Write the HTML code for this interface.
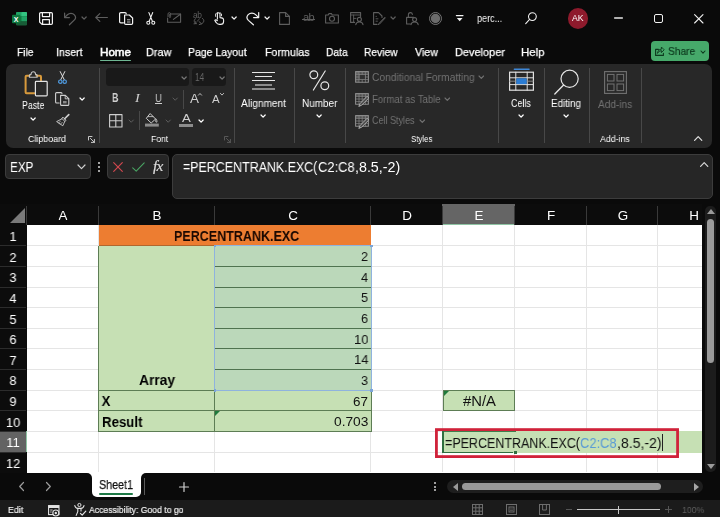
<!DOCTYPE html>
<html>
<head>
<meta charset="utf-8">
<title>Excel</title>
<style>
*{box-sizing:border-box;margin:0;padding:0}
html,body{width:720px;height:517px;overflow:hidden;background:#0a0a0a;font-family:"Liberation Sans",sans-serif;color:#fff}
#root{position:relative;width:720px;height:517px;background:#0a0a0a;overflow:hidden}
.a{position:absolute}
.t{position:absolute;white-space:nowrap;line-height:1;transform-origin:0 50%;display:inline-block;will-change:transform}
svg{position:absolute;overflow:visible}
#ribbon{position:absolute;left:6px;top:64px;width:706px;height:84px;background:#282828;border-radius:7px}
.sep{position:absolute;width:1px;background:#484848}
.fbox{position:absolute;background:#262626;border:1px solid #3c3c3c;border-radius:4px}
</style>
</head>
<body>
<div id="root">
<svg style="left:11.5px;top:11.5px" width="15" height="14" viewBox="0 0 15 14" ><rect x="4" y="0" width="11" height="13.6" rx="1.3" fill="#185c37"/><rect x="4" y="0" width="11" height="4.6" rx="1.3" fill="#21a366"/><rect x="9.5" y="0" width="5.5" height="4.6" rx="1.3" fill="#33c481"/><rect x="4" y="4.5" width="11" height="4.6" fill="#107c41"/><rect x="9.5" y="4.5" width="5.5" height="4.6" fill="#21a366"/><rect x="0" y="2.8" width="8.4" height="8.4" rx="0.9" fill="#0e7a40"/><text x="4.2" y="9.5" font-family="Liberation Sans, sans-serif" font-weight="bold" font-size="7" fill="#fff" text-anchor="middle">X</text></svg>
<svg style="left:39px;top:12px" width="14" height="13" viewBox="0 0 14 13" ><path d="M1.8 0.6 H12.2 Q13.4 0.6 13.4 1.8 V11.2 Q13.4 12.4 12.2 12.4 H3 L0.6 10 V1.8 Q0.6 0.6 1.8 0.6 Z" fill="none" stroke="#f2f2f2" stroke-width="1.2" stroke-linecap="round" stroke-linejoin="round" /><path d="M3.4 0.8 V4.6 H10.6 V0.8" fill="none" stroke="#f2f2f2" stroke-width="1.2" stroke-linecap="round" stroke-linejoin="round" /><path d="M3.6 12.2 V7.6 H10.4 V12.2" fill="none" stroke="#f2f2f2" stroke-width="1.2" stroke-linecap="round" stroke-linejoin="round" /></svg>
<svg style="left:64px;top:12px" width="12" height="13.4" viewBox="0 0 12 13.4" ><path d="M0.6 1 V5.6 H5.4" fill="none" stroke="#5e5e5e" stroke-width="1.2" stroke-linecap="round" stroke-linejoin="round" /><path d="M0.8 5.4 L3.4 2.8 C5.4 0.8 8.6 0.8 10.4 2.8 C12.2 4.8 11.6 6.8 10.2 8.2 L5.4 12.8" fill="none" stroke="#5e5e5e" stroke-width="1.2" stroke-linecap="round" stroke-linejoin="round" /></svg>
<svg style="left:81.9px;top:16.5px" width="4.2" height="2.2" viewBox="0 0 4.2 2.2" ><path d="M0 0 L2.1 2.2 L4.2 0" fill="none" stroke="#5e5e5e" stroke-width="1.25" stroke-linecap="round" stroke-linejoin="round"/></svg>
<svg style="left:95px;top:13px" width="13" height="9" viewBox="0 0 13 9" ><path d="M12.4 4.5 H0.8 M4.8 0.6 L0.8 4.5 L4.8 8.4" fill="none" stroke="#5e5e5e" stroke-width="1.2" stroke-linecap="round" stroke-linejoin="round" /></svg>
<svg style="left:119px;top:12px" width="15" height="13" viewBox="0 0 15 13" ><path d="M4.4 10.8 H1.8 Q0.6 10.8 0.6 9.6 V1.8 Q0.6 0.6 1.8 0.6 H6 Q7.2 0.6 7.2 1.8" fill="none" stroke="#f2f2f2" stroke-width="1.2" stroke-linecap="round" stroke-linejoin="round" /><path d="M5.6 3 H10.4 L13.6 6 V11.2 Q13.6 12.4 12.4 12.4 H6.8 Q5.6 12.4 5.6 11.2 Z" fill="none" stroke="#f2f2f2" stroke-width="1.2" stroke-linecap="round" stroke-linejoin="round" /><path d="M8.4 7.8 H11 M8.4 10 H11" fill="none" stroke="#f2f2f2" stroke-width="0.8" stroke-linecap="round" stroke-linejoin="round" /></svg>
<svg style="left:145.6px;top:12px" width="9.6" height="13" viewBox="0 0 9.6 13" ><path d="M2.9 0.6 L6.4 9.2 M6.7 0.6 L3.2 9.2" fill="none" stroke="#f2f2f2" stroke-width="1.1" stroke-linecap="round" stroke-linejoin="round" /><circle cx="2.3" cy="10.8" r="1.5" fill="none" stroke="#f2f2f2" stroke-width="1.1"/><circle cx="7.3" cy="10.8" r="1.5" fill="none" stroke="#f2f2f2" stroke-width="1.1"/></svg>
<svg style="left:167px;top:12px" width="14.4" height="11" viewBox="0 0 14.4 11" ><path d="M3.6 2 H13.6 V10.2 H0.6 V6" fill="none" stroke="#5e5e5e" stroke-width="1.1" stroke-linecap="round" stroke-linejoin="round" /><path d="M6.4 7.4 L13.4 2.2" fill="none" stroke="#5e5e5e" stroke-width="1.1" stroke-linecap="round" stroke-linejoin="round" /><path d="M1 4.6 V2.2 Q1 0.6 2.3 0.6 Q3.6 0.6 3.6 2.2 V4.8 Q3.6 5.6 2.9 5.6 Q2.3 5.6 2.3 4.8 V2.4" fill="none" stroke="#5e5e5e" stroke-width="0.9" stroke-linecap="round" stroke-linejoin="round" /></svg>
<span class="t" style="left:193.4px;top:11.2px;font-size:8.4px;color:#5e5e5e;letter-spacing:-0.3px">ab</span>
<svg style="left:193px;top:18.4px" width="12" height="7" viewBox="0 0 12 7" ><path d="M2.6 0.6 C0.6 1.8 0.6 4.4 3 5.6 M3 5.6 L1 5.8 M3 5.6 L2.8 3.6" fill="none" stroke="#5e5e5e" stroke-width="1" stroke-linecap="round" stroke-linejoin="round" /><path d="M9.4 0.4 C11.6 1.6 11.4 4.6 8.6 5.8 M6 3.6 L8.6 5.8 L6.2 6.6" fill="none" stroke="#5e5e5e" stroke-width="1" stroke-linecap="round" stroke-linejoin="round" /><path d="M4.4 3 L6.6 0.8" fill="none" stroke="#5e5e5e" stroke-width="0.9" stroke-linecap="round" stroke-linejoin="round" /></svg>
<svg style="left:213.6px;top:12px" width="10.4" height="13" viewBox="0 0 10.4 13" ><path d="M3.4 7 V2.2 Q3.4 0.7 4.7 0.7 Q6 0.7 6 2.2 V5.6 Q9.6 5.6 9.6 8 V9.4 Q9.6 12.4 6.6 12.4 H5.4 Q3.2 12.4 2.2 10.6 L0.8 8.4 Q1.6 7.2 3.4 8.6" fill="none" stroke="#f2f2f2" stroke-width="1.1" stroke-linecap="round" stroke-linejoin="round" /><path d="M1.6 4.4 Q0.8 1 3.6 0.6 M7.6 3.8 Q8.2 1.4 6.4 0.8" fill="none" stroke="#f2f2f2" stroke-width="0.9" stroke-linecap="round" stroke-linejoin="round" /></svg>
<svg style="left:231.5px;top:16.5px" width="4.2" height="2.2" viewBox="0 0 4.2 2.2" ><path d="M0 0 L2.1 2.2 L4.2 0" fill="none" stroke="#f2f2f2" stroke-width="1.25" stroke-linecap="round" stroke-linejoin="round"/></svg>
<svg style="left:246px;top:12px" width="13.4" height="13.4" viewBox="0 0 13.4 13.4" ><path d="M12.7 0.6 V5.6 H7.6" fill="none" stroke="#f2f2f2" stroke-width="1.2" stroke-linecap="round" stroke-linejoin="round" /><path d="M12.5 5.4 L9.6 2.6 C7.6 0.6 4.2 0.6 2.2 2.6 C0.2 4.8 0.8 6.8 2.4 8.4 L7.4 12.8" fill="none" stroke="#f2f2f2" stroke-width="1.2" stroke-linecap="round" stroke-linejoin="round" /></svg>
<svg style="left:264.5px;top:16.5px" width="4.2" height="2.2" viewBox="0 0 4.2 2.2" ><path d="M0 0 L2.1 2.2 L4.2 0" fill="none" stroke="#f2f2f2" stroke-width="1.25" stroke-linecap="round" stroke-linejoin="round"/></svg>
<svg style="left:279px;top:12px" width="11" height="13" viewBox="0 0 11 13" ><path d="M0.6 0.6 H6.6 L10.4 4.4 V12.4 H0.6 Z" fill="none" stroke="#5e5e5e" stroke-width="1.1" stroke-linecap="round" stroke-linejoin="round" /><path d="M6.6 0.6 V4.4 H10.4" fill="none" stroke="#5e5e5e" stroke-width="1.1" stroke-linecap="round" stroke-linejoin="round" /></svg>
<span class="t" style="left:303.2px;top:11.6px;font-size:11px;color:#5e5e5e;letter-spacing:-0.5px">ab</span>
<div class="a" style="left:301.6px;top:18.8px;width:13.6px;height:1.1px;background:#5e5e5e;"></div>
<svg style="left:325px;top:13px" width="14" height="10.6" viewBox="0 0 14 10.6" ><path d="M0.6 2 H3.2 L4 0.6 H6.4 L7.2 2 H13.4 V10 H0.6 Z" fill="none" stroke="#5e5e5e" stroke-width="1.1" stroke-linecap="round" stroke-linejoin="round" /><circle cx="7" cy="5.8" r="2.5" fill="none" stroke="#5e5e5e" stroke-width="1.1"/></svg>
<svg style="left:350px;top:12px" width="13.4" height="13" viewBox="0 0 13.4 13" ><path d="M4.6 10.4 H0.6 V0.6 H10.6 V4.4" fill="none" stroke="#5e5e5e" stroke-width="1.1" stroke-linecap="round" stroke-linejoin="round" /><path d="M0.6 3 H10.6 M3.6 3 V10.4 M3.6 6.4 H6" fill="none" stroke="#5e5e5e" stroke-width="0.9" stroke-linecap="round" stroke-linejoin="round" /><circle cx="9.4" cy="7.4" r="2" fill="none" stroke="#5e5e5e" stroke-width="1.1"/><path d="M5.8 12.6 Q6.2 10 9.4 10 Q12.6 10 13 12.6" fill="none" stroke="#5e5e5e" stroke-width="1.1" stroke-linecap="round" stroke-linejoin="round" /></svg>
<svg style="left:372.5px;top:12px" width="12.4" height="13" viewBox="0 0 12.4 13" ><path d="M4 12.4 H0.6 V0.6 H5.6 L9 4 V5.4" fill="none" stroke="#5e5e5e" stroke-width="1.1" stroke-linecap="round" stroke-linejoin="round" /><path d="M11.6 5.6 L6 11.4 L5.2 12.6 L6.6 12 L12 6.2 Z" fill="none" stroke="#5e5e5e" stroke-width="1" stroke-linecap="round" stroke-linejoin="round" /><path d="M3 4.4 H3.4 M3 6.8 H5 M3 9.2 H4.4" fill="none" stroke="#5e5e5e" stroke-width="0.9" stroke-linecap="round" stroke-linejoin="round" /></svg>
<svg style="left:390.5px;top:16.5px" width="4.2" height="2.2" viewBox="0 0 4.2 2.2" ><path d="M0 0 L2.1 2.2 L4.2 0" fill="none" stroke="#5e5e5e" stroke-width="1.25" stroke-linecap="round" stroke-linejoin="round"/></svg>
<svg style="left:406px;top:12px" width="12.4" height="13" viewBox="0 0 12.4 13" ><path d="M4.4 12 H0.6 V5.4 H7.6" fill="none" stroke="#5e5e5e" stroke-width="1.1" stroke-linecap="round" stroke-linejoin="round" /><path d="M2.4 5.2 V2.8 Q2.4 0.6 4.4 0.6 Q6.2 0.6 6.4 2.4" fill="none" stroke="#5e5e5e" stroke-width="1.1" stroke-linecap="round" stroke-linejoin="round" /><circle cx="8.6" cy="7.6" r="2" fill="none" stroke="#5e5e5e" stroke-width="1.1"/><path d="M5 12.6 Q5.4 10 8.6 10 Q11.8 10 12.2 12.6" fill="none" stroke="#5e5e5e" stroke-width="1.1" stroke-linecap="round" stroke-linejoin="round" /></svg>
<svg style="left:428.8px;top:11.8px" width="13" height="13" viewBox="0 0 13 13" ><circle cx="6.5" cy="6.5" r="6" fill="none" stroke="#808080" stroke-width="0.9"/><circle cx="6.5" cy="6.5" r="4.7" fill="#6b6b6b"/></svg>
<svg style="left:455.8px;top:15.4px" width="7.4" height="6.6" viewBox="0 0 7.4 6.6" ><path d="M0.4 0.6 H7" stroke="#f2f2f2" stroke-width="1.2" stroke-linecap="round"/><path d="M0.8 3 H6.6 L3.7 6.2 Z" fill="#f2f2f2"/></svg>
<span class="t" style="left:476.8px;top:13.1px;font-size:11.59px;color:#f2f2f2;transform:scaleX(0.783);">perc...</span>
<svg style="left:524.6px;top:12.4px" width="12" height="12.4" viewBox="0 0 12 12.4" ><circle cx="7.4" cy="4.6" r="3.9" fill="none" stroke="#f2f2f2" stroke-width="1.05"/><path d="M4.6 7.4 L0.7 11.6" fill="none" stroke="#f2f2f2" stroke-width="1.1" stroke-linecap="round" stroke-linejoin="round" /></svg>
<div class="a" style="left:567.6px;top:8px;width:20.6px;height:20.6px;background:#8e1a2c;border-radius:50%"></div>
<span class="t" style="left:572.2px;top:14.3px;font-size:8.66px;color:#fff;transform:scaleX(0.986);">AK</span>
<div class="a" style="left:614px;top:17.3px;width:8.6px;height:1.4px;background:#b0b0b0;border-radius:0.7px"></div>
<div class="a" style="left:654.2px;top:14px;width:9px;height:9px;background:transparent;border:1px solid #f2f2f2;border-radius:2px"></div>
<svg style="left:694px;top:13.8px" width="9.6" height="9.6" viewBox="0 0 9.6 9.6" ><path d="M0.6 0.6 L9 9 M9 0.6 L0.6 9" fill="none" stroke="#f2f2f2" stroke-width="1.1" stroke-linecap="round" stroke-linejoin="round" /></svg>
<span class="t" style="left:17.2px;top:46.6px;font-size:11.59px;color:#fff;transform:scaleX(0.879);-webkit-text-stroke:0.25px #fff;">File</span>
<span class="t" style="left:56.0px;top:46.6px;font-size:11.59px;color:#fff;transform:scaleX(0.918);-webkit-text-stroke:0.25px #fff;">Insert</span>
<span class="t" style="left:100.0px;top:46.6px;font-size:11.59px;color:#fff;transform:scaleX(1.004);-webkit-text-stroke:0.55px #fff;">Home</span>
<span class="t" style="left:146.2px;top:46.6px;font-size:11.59px;color:#fff;transform:scaleX(0.940);-webkit-text-stroke:0.25px #fff;">Draw</span>
<span class="t" style="left:188.2px;top:46.6px;font-size:11.59px;color:#fff;transform:scaleX(0.904);-webkit-text-stroke:0.25px #fff;">Page Layout</span>
<span class="t" style="left:265.0px;top:46.6px;font-size:11.59px;color:#fff;transform:scaleX(0.924);-webkit-text-stroke:0.25px #fff;">Formulas</span>
<span class="t" style="left:326.2px;top:46.6px;font-size:11.59px;color:#fff;transform:scaleX(0.891);-webkit-text-stroke:0.25px #fff;">Data</span>
<span class="t" style="left:364.4px;top:46.6px;font-size:11.59px;color:#fff;transform:scaleX(0.885);-webkit-text-stroke:0.25px #fff;">Review</span>
<span class="t" style="left:414.6px;top:46.6px;font-size:11.59px;color:#fff;transform:scaleX(0.924);-webkit-text-stroke:0.25px #fff;">View</span>
<span class="t" style="left:454.6px;top:46.6px;font-size:11.59px;color:#fff;transform:scaleX(0.947);-webkit-text-stroke:0.25px #fff;">Developer</span>
<span class="t" style="left:521.0px;top:46.6px;font-size:11.59px;color:#fff;transform:scaleX(0.991);-webkit-text-stroke:0.25px #fff;">Help</span>
<div class="a" style="left:100px;top:59.9px;width:31px;height:1.6px;background:#6fb793;border-radius:1px"></div>
<div class="a" style="left:650.6px;top:41px;width:58.6px;height:20px;background:#46a96a;border-radius:4px"></div>
<svg style="left:654.6px;top:45.6px" width="9.6" height="10" viewBox="0 0 9.6 10" ><path d="M3.4 3.4 H0.6 V9.4 H8.4 V7.4" fill="none" stroke="#0d3a1e" stroke-width="1.1" stroke-linecap="round" stroke-linejoin="round" /><path d="M2.6 7 Q3 3.2 6.4 3.2 V1 L9.2 3.8 L6.4 6.6 V4.6 Q3.8 4.6 2.6 7 Z" fill="none" stroke="#0d3a1e" stroke-width="0.9" stroke-linecap="round" stroke-linejoin="round" /></svg>
<span class="t" style="left:668.4px;top:45.8px;font-size:11.17px;color:#0d3a1e;transform:scaleX(0.913);-webkit-text-stroke:0.2px #0d3a1e;">Share</span>
<svg style="left:700.8px;top:50.5px" width="4" height="2.2" viewBox="0 0 4 2.2" ><path d="M0 0 L2.0 2.2 L4 0" fill="none" stroke="#0d3a1e" stroke-width="1.1" stroke-linecap="round" stroke-linejoin="round"/></svg>
<div id="ribbon"></div>
<svg style="left:23.6px;top:70.6px" width="24" height="26" viewBox="0 0 24 26" ><path d="M5.4 4.8 H2.6 Q1.6 4.8 1.6 5.8 V21.2 Q1.6 22.2 2.6 22.2 H10.4" fill="none" stroke="#d89a3c" stroke-width="2" stroke-linecap="round" stroke-linejoin="round" /><path d="M12.6 4.8 H16 Q17 4.8 17 5.8 V9.4" fill="none" stroke="#d89a3c" stroke-width="2" stroke-linecap="round" stroke-linejoin="round" /><path d="M5.4 6.2 V4.4 Q5.4 3.6 6.4 3.6 H7 Q7 0.8 9.3 0.8 Q11.6 0.8 11.6 3.6 H12.2 Q13.2 3.6 13.2 4.4 V6.2 Z" fill="none" stroke="#c4c4c4" stroke-width="1.1" stroke-linecap="round" stroke-linejoin="round" /><rect x="11.4" y="10.4" width="11.8" height="14.4" rx="0.8" fill="#2a2a2a" stroke="#e4e4e4" stroke-width="1.2"/></svg>
<span class="t" style="left:22.0px;top:101.0px;font-size:10.34px;color:#fff;transform:scaleX(0.848);">Paste</span>
<svg style="left:30.699999999999996px;top:118.10000000000001px" width="4.2" height="2.2" viewBox="0 0 4.2 2.2" ><path d="M0 0 L2.1 2.2 L4.2 0" fill="none" stroke="#fff" stroke-width="1.25" stroke-linecap="round" stroke-linejoin="round"/></svg>
<svg style="left:58px;top:71px" width="9" height="13.4" viewBox="0 0 9 13.4" ><path d="M2.2 0.6 L6.2 8.6 M6.8 0.6 L2.8 8.6" fill="none" stroke="#dcdcdc" stroke-width="1" stroke-linecap="round" stroke-linejoin="round" /><circle cx="2.3" cy="10.7" r="1.7" fill="none" stroke="#4f9be0" stroke-width="1.2"/><circle cx="6.7" cy="10.7" r="1.7" fill="none" stroke="#4f9be0" stroke-width="1.2"/></svg>
<svg style="left:55px;top:92px" width="15" height="14" viewBox="0 0 15 14" ><path d="M4.2 11 H1.6 Q0.6 11 0.6 10 V1.6 Q0.6 0.6 1.6 0.6 H6 Q7 0.6 7 1.6" fill="none" stroke="#d0d0d0" stroke-width="1.1" stroke-linecap="round" stroke-linejoin="round" /><path d="M5.6 3.4 H10.4 L13.8 6.6 V12.4 Q13.8 13.4 12.8 13.4 H6.6 Q5.6 13.4 5.6 12.4 Z" fill="none" stroke="#d0d0d0" stroke-width="1.1" stroke-linecap="round" stroke-linejoin="round" /><path d="M10.2 3.6 V6.8 H13.6" fill="none" stroke="#d0d0d0" stroke-width="0.9" stroke-linecap="round" stroke-linejoin="round" /><rect x="8" y="9" width="3.6" height="2.4" fill="#8a8a8a"/></svg>
<svg style="left:79.9px;top:98.30000000000001px" width="4.2" height="2.2" viewBox="0 0 4.2 2.2" ><path d="M0 0 L2.1 2.2 L4.2 0" fill="none" stroke="#fff" stroke-width="1.25" stroke-linecap="round" stroke-linejoin="round"/></svg>
<svg style="left:55.6px;top:114.2px" width="14" height="12.4" viewBox="0 0 14 12.4" ><path d="M12.8 0.6 L8.6 4.8" fill="none" stroke="#d0d0d0" stroke-width="1.6" stroke-linecap="round" stroke-linejoin="round" /><path d="M7.2 3.4 L10 6.2 L8.8 7.4 L6 4.6 Z" fill="none" stroke="#d0d0d0" stroke-width="0.9" stroke-linecap="round" stroke-linejoin="round" /><path d="M6 4.8 L0.6 7.6 L6.8 11.8 L8.8 7.4" fill="none" stroke="#d0d0d0" stroke-width="0.9" stroke-linecap="round" stroke-linejoin="round" /><path d="M2.6 8.8 L4.4 7.4 M4.4 10.2 L6.2 8.4" fill="none" stroke="#d0d0d0" stroke-width="0.7" stroke-linecap="round" stroke-linejoin="round" /></svg>
<span class="t" style="left:27.6px;top:134.1px;font-size:9.64px;color:#fff;transform:scaleX(0.922);">Clipboard</span>
<svg style="left:88px;top:136px" width="7" height="7" viewBox="0 0 7 7" ><path d="M0.5 4 V0.5 H4" fill="none" stroke="#d8d8d8" stroke-width="0.9" stroke-linecap="round" stroke-linejoin="round" /><path d="M2.4 2.4 L6.4 6.4 M6.4 3.4 V6.4 H3.4" fill="none" stroke="#d8d8d8" stroke-width="0.9" stroke-linecap="round" stroke-linejoin="round" /></svg>
<div class="sep" style="left:98.6px;top:68px;height:75px"></div>
<div class="a" style="left:105.6px;top:68px;width:83px;height:18.4px;background:#191919;border-radius:3.5px"></div>
<svg style="left:182.3px;top:76.5px" width="4.2" height="2.2" viewBox="0 0 4.2 2.2" ><path d="M0 0 L2.1 2.2 L4.2 0" fill="none" stroke="#777" stroke-width="1.25" stroke-linecap="round" stroke-linejoin="round"/></svg>
<div class="a" style="left:192px;top:68px;width:34px;height:18.4px;background:#191919;border-radius:3.5px"></div>
<span class="t" style="left:194.8px;top:72.4px;font-size:10.61px;color:#6a6a6a;transform:scaleX(0.762);">14</span>
<svg style="left:219.9px;top:76.5px" width="4.2" height="2.2" viewBox="0 0 4.2 2.2" ><path d="M0 0 L2.1 2.2 L4.2 0" fill="none" stroke="#777" stroke-width="1.25" stroke-linecap="round" stroke-linejoin="round"/></svg>
<span class="t" style="left:112.2px;top:92.2px;font-size:12.15px;color:#cfcfcf;font-weight:bold;transform:scaleX(0.729);">B</span>
<span class="t" style="left:135.0px;top:92.2px;font-size:12.15px;color:#cfcfcf;font-style:italic;transform:scaleX(1.186);font-family:'Liberation Serif',serif;">I</span>
<span class="t" style="left:155.2px;top:92.1px;font-size:11.73px;color:#cfcfcf;transform:scaleX(0.803);">U</span>
<div class="a" style="left:155px;top:103.4px;width:7.2px;height:1px;background:#cfcfcf;"></div>
<svg style="left:172.60000000000002px;top:97.85px" width="4.4" height="2.3" viewBox="0 0 4.4 2.3" ><path d="M0 0 L2.2 2.3 L4.4 0" fill="none" stroke="#5e5e5e" stroke-width="1" stroke-linecap="round" stroke-linejoin="round"/></svg>
<div class="sep" style="left:183px;top:89.6px;height:19px"></div>
<span class="t" style="left:189.6px;top:91.8px;font-size:13.41px;color:#cfcfcf;transform:scaleX(0.983);">A</span>
<svg style="left:198.4px;top:92.6px" width="4" height="2.6" viewBox="0 0 4 2.6" ><path d="M0.4 2.2 L2 0.5 L3.6 2.2" fill="none" stroke="#cfcfcf" stroke-width="0.9" stroke-linecap="round" stroke-linejoin="round" /></svg>
<span class="t" style="left:212.2px;top:93.5px;font-size:11.45px;color:#cfcfcf;transform:scaleX(0.969);">A</span>
<svg style="left:219.8px;top:93.2px" width="4" height="2.6" viewBox="0 0 4 2.6" ><path d="M0.4 0.4 L2 2.1 L3.6 0.4" fill="none" stroke="#cfcfcf" stroke-width="0.9" stroke-linecap="round" stroke-linejoin="round" /></svg>
<svg style="left:108.6px;top:113.6px" width="13.6" height="13.6" viewBox="0 0 13.6 13.6" ><path d="M0.6 0.6 H13 V13 H0.6 Z M6.8 0.6 V13 M0.6 6.8 H13" fill="none" stroke="#cfcfcf" stroke-width="1.1" stroke-linecap="round" stroke-linejoin="round" /></svg>
<svg style="left:128.60000000000002px;top:119.64999999999999px" width="4.4" height="2.3" viewBox="0 0 4.4 2.3" ><path d="M0 0 L2.2 2.3 L4.4 0" fill="none" stroke="#5e5e5e" stroke-width="1" stroke-linecap="round" stroke-linejoin="round"/></svg>
<div class="sep" style="left:139.4px;top:111px;height:19px"></div>
<svg style="left:145px;top:113.4px" width="14" height="14" viewBox="0 0 14 14" ><path d="M5.4 0.8 L10.6 6 L6.2 10 L1.6 5.6 Z" fill="none" stroke="#cfcfcf" stroke-width="1" stroke-linecap="round" stroke-linejoin="round" /><path d="M3.4 3.6 H8" fill="none" stroke="#cfcfcf" stroke-width="0.8" stroke-linecap="round" stroke-linejoin="round" /><path d="M11.2 6.2 Q12.8 8.4 11.8 9.2 Q10.6 9.6 10.6 8 Z" fill="none" stroke="#cfcfcf" stroke-width="0.8" stroke-linecap="round" stroke-linejoin="round" /><rect x="0" y="10.6" width="13.8" height="3" fill="#8c8c8c"/></svg>
<svg style="left:165.60000000000002px;top:119.64999999999999px" width="4.4" height="2.3" viewBox="0 0 4.4 2.3" ><path d="M0 0 L2.2 2.3 L4.4 0" fill="none" stroke="#5e5e5e" stroke-width="1" stroke-linecap="round" stroke-linejoin="round"/></svg>
<span class="t" style="left:181.6px;top:112.9px;font-size:11.45px;color:#cfcfcf;transform:scaleX(1.152);">A</span>
<div class="a" style="left:179.4px;top:124px;width:13.4px;height:3px;background:#8c8c8c;"></div>
<svg style="left:199.1px;top:119.7px" width="4.2" height="2.2" viewBox="0 0 4.2 2.2" ><path d="M0 0 L2.1 2.2 L4.2 0" fill="none" stroke="#fff" stroke-width="1.25" stroke-linecap="round" stroke-linejoin="round"/></svg>
<span class="t" style="left:150.8px;top:134.1px;font-size:9.64px;color:#fff;transform:scaleX(0.893);">Font</span>
<svg style="left:224px;top:136px" width="7" height="7" viewBox="0 0 7 7" ><path d="M0.5 4 V0.5 H4" fill="none" stroke="#5e5e5e" stroke-width="0.9" stroke-linecap="round" stroke-linejoin="round" /><path d="M2.4 2.4 L6.4 6.4 M6.4 3.4 V6.4 H3.4" fill="none" stroke="#5e5e5e" stroke-width="0.9" stroke-linecap="round" stroke-linejoin="round" /></svg>
<div class="sep" style="left:233.6px;top:68px;height:75px"></div>
<div class="a" style="left:252px;top:71.9px;width:23.4px;height:1px;background:#e6e6e6;"></div>
<div class="a" style="left:255px;top:76px;width:17.4px;height:1px;background:#e6e6e6;"></div>
<div class="a" style="left:252px;top:80.1px;width:23.4px;height:1px;background:#e6e6e6;"></div>
<div class="a" style="left:255px;top:84px;width:17.4px;height:1.8px;background:#8c8c8c;"></div>
<div class="a" style="left:252px;top:88.1px;width:23.4px;height:1.8px;background:#8c8c8c;"></div>
<span class="t" style="left:241.2px;top:99.1px;font-size:10.34px;color:#fff;transform:scaleX(0.980);">Alignment</span>
<svg style="left:260.9px;top:115.30000000000001px" width="4.2" height="2.2" viewBox="0 0 4.2 2.2" ><path d="M0 0 L2.1 2.2 L4.2 0" fill="none" stroke="#fff" stroke-width="1.25" stroke-linecap="round" stroke-linejoin="round"/></svg>
<div class="sep" style="left:294.4px;top:68px;height:75px"></div>
<svg style="left:309.4px;top:70.4px" width="21" height="21" viewBox="0 0 21 21" ><circle cx="4.8" cy="4.8" r="3.9" fill="none" stroke="#e6e6e6" stroke-width="1.2"/><circle cx="15.8" cy="15.8" r="3.9" fill="none" stroke="#e6e6e6" stroke-width="1.2"/><path d="M16.2 1 L4.4 20" fill="none" stroke="#e6e6e6" stroke-width="1.2" stroke-linecap="round" stroke-linejoin="round" /></svg>
<span class="t" style="left:302.2px;top:99.1px;font-size:10.34px;color:#fff;transform:scaleX(0.964);">Number</span>
<svg style="left:317.29999999999995px;top:115.30000000000001px" width="4.2" height="2.2" viewBox="0 0 4.2 2.2" ><path d="M0 0 L2.1 2.2 L4.2 0" fill="none" stroke="#fff" stroke-width="1.25" stroke-linecap="round" stroke-linejoin="round"/></svg>
<div class="sep" style="left:345px;top:68px;height:75px"></div>
<svg style="left:355px;top:70.8px" width="14" height="14" viewBox="0 0 14 14" ><path d="M0.6 0.6 H13.4 V11.2 H0.6 Z" fill="none" stroke="#8a8a8a" stroke-width="1.1" stroke-linecap="round" stroke-linejoin="round" /><path d="M0.6 3.4 H13.4 M0.6 6 H13.4 M0.6 8.6 H13.4 M4 0.6 V11.2 M7.2 0.6 V11.2 M10.4 0.6 V11.2" fill="none" stroke="#8a8a8a" stroke-width="0.7" stroke-linecap="round" stroke-linejoin="round" /><rect x="4.3" y="3.7" width="5.9" height="4.7" fill="#303030" stroke="#8a8a8a" stroke-width="0.5"/><rect x="0.6" y="0.6" width="3.4" height="10.6" fill="#8a8a8a" opacity="0.35"/><rect x="0.6" y="0.6" width="12.8" height="2.8" fill="#8a8a8a" opacity="0.35"/></svg>
<svg style="left:355px;top:92.8px" width="14" height="14" viewBox="0 0 14 14" ><path d="M0.6 0.6 H13.4 V11.2 H0.6 Z" fill="none" stroke="#8a8a8a" stroke-width="1.1" stroke-linecap="round" stroke-linejoin="round" /><path d="M0.6 3.4 H13.4 M0.6 6 H13.4 M0.6 8.6 H13.4 M4 0.6 V11.2 M7.2 0.6 V11.2 M10.4 0.6 V11.2" fill="none" stroke="#8a8a8a" stroke-width="0.7" stroke-linecap="round" stroke-linejoin="round" /><rect x="0.6" y="0.6" width="12.8" height="2.8" fill="#8a8a8a" opacity="0.4"/><path d="M12.4 3.6 L13.8 5 L6.6 12.2 L3.8 13.4 L5 10.8 Z" fill="#4a4a4a" stroke="#b8b8b8" stroke-width="0.9" stroke-linecap="round" stroke-linejoin="round" /></svg>
<svg style="left:355px;top:114.6px" width="14" height="14" viewBox="0 0 14 14" ><path d="M0.6 0.6 H13.4 V11.2 H0.6 Z" fill="none" stroke="#8a8a8a" stroke-width="1.1" stroke-linecap="round" stroke-linejoin="round" /><path d="M0.6 3.4 H13.4 M0.6 6 H13.4 M0.6 8.6 H13.4 M4 0.6 V11.2 M7.2 0.6 V11.2 M10.4 0.6 V11.2" fill="none" stroke="#8a8a8a" stroke-width="0.7" stroke-linecap="round" stroke-linejoin="round" /><rect x="0.6" y="0.6" width="12.8" height="2.8" fill="#8a8a8a" opacity="0.4"/><path d="M12.4 3.6 L13.8 5 L6.6 12.2 L3.8 13.4 L5 10.8 Z" fill="#4a4a4a" stroke="#b8b8b8" stroke-width="0.9" stroke-linecap="round" stroke-linejoin="round" /></svg>
<span class="t" style="left:372.4px;top:72.5px;font-size:10.34px;color:#727272;transform:scaleX(0.987);">Conditional Formatting</span>
<svg style="left:478.9px;top:76.2px" width="4.6" height="2.4" viewBox="0 0 4.6 2.4" ><path d="M0 0 L2.3 2.4 L4.6 0" fill="none" stroke="#727272" stroke-width="1.1" stroke-linecap="round" stroke-linejoin="round"/></svg>
<span class="t" style="left:372.4px;top:94.9px;font-size:10.34px;color:#727272;transform:scaleX(0.931);">Format as Table</span>
<svg style="left:445.09999999999997px;top:98.0px" width="4.6" height="2.4" viewBox="0 0 4.6 2.4" ><path d="M0 0 L2.3 2.4 L4.6 0" fill="none" stroke="#727272" stroke-width="1.1" stroke-linecap="round" stroke-linejoin="round"/></svg>
<span class="t" style="left:372.4px;top:116.1px;font-size:10.34px;color:#727272;transform:scaleX(0.873);">Cell Styles</span>
<svg style="left:419.7px;top:119.8px" width="4.6" height="2.4" viewBox="0 0 4.6 2.4" ><path d="M0 0 L2.3 2.4 L4.6 0" fill="none" stroke="#727272" stroke-width="1.1" stroke-linecap="round" stroke-linejoin="round"/></svg>
<span class="t" style="left:410.6px;top:134.1px;font-size:9.64px;color:#fff;transform:scaleX(0.816);">Styles</span>
<div class="sep" style="left:498px;top:68px;height:75px"></div>
<svg style="left:508.6px;top:67.6px" width="25" height="23" viewBox="0 0 25 23" ><path d="M5.4 1.2 H20" fill="none" stroke="#3f88d8" stroke-width="1.5" stroke-linecap="round" stroke-linejoin="round" /><rect x="0.6" y="4.2" width="23.8" height="18" fill="none" stroke="#e0e0e0" stroke-width="1.2"/><path d="M0.6 9.8 H24.4 M0.6 16.6 H24.4 M6.8 4.2 V22.2 M18.2 4.2 V22.2" fill="none" stroke="#e0e0e0" stroke-width="1" stroke-linecap="round" stroke-linejoin="round" /><path d="M0.6 13.2 H6.8 M18.2 13.2 H24.4" fill="none" stroke="#9a9a9a" stroke-width="0.8" stroke-linecap="round" stroke-linejoin="round" /><rect x="7.3" y="10.3" width="10.4" height="5.8" fill="#2b7cd3"/></svg>
<span class="t" style="left:511.0px;top:99.1px;font-size:10.34px;color:#fff;transform:scaleX(0.862);">Cells</span>
<svg style="left:518.5px;top:115.2px" width="4.2" height="2.2" viewBox="0 0 4.2 2.2" ><path d="M0 0 L2.1 2.2 L4.2 0" fill="none" stroke="#fff" stroke-width="1.25" stroke-linecap="round" stroke-linejoin="round"/></svg>
<div class="sep" style="left:543.6px;top:68px;height:75px"></div>
<svg style="left:553.6px;top:68.6px" width="26" height="26" viewBox="0 0 26 26" ><circle cx="15.6" cy="9.8" r="8.6" fill="none" stroke="#e6e6e6" stroke-width="1.2"/><path d="M9.6 16 L0.8 25" fill="none" stroke="#e6e6e6" stroke-width="1.3" stroke-linecap="round" stroke-linejoin="round" /></svg>
<span class="t" style="left:550.8px;top:99.1px;font-size:10.34px;color:#fff;transform:scaleX(0.950);">Editing</span>
<svg style="left:563.5px;top:115.2px" width="4.2" height="2.2" viewBox="0 0 4.2 2.2" ><path d="M0 0 L2.1 2.2 L4.2 0" fill="none" stroke="#fff" stroke-width="1.25" stroke-linecap="round" stroke-linejoin="round"/></svg>
<div class="sep" style="left:589px;top:68px;height:75px"></div>
<svg style="left:604px;top:71px" width="23" height="23" viewBox="0 0 23 23" ><rect x="0.6" y="0.6" width="21.8" height="21.8" fill="none" stroke="#727272" stroke-width="1.1"/><rect x="3.4" y="3.4" width="6.6" height="6.6" fill="none" stroke="#727272" stroke-width="1"/><rect x="3.4" y="13" width="6.6" height="6.6" fill="none" stroke="#727272" stroke-width="1"/><rect x="13" y="3.4" width="6.6" height="6.6" fill="none" stroke="#727272" stroke-width="1"/><rect x="13" y="13" width="6.6" height="6.6" fill="none" stroke="#727272" stroke-width="1"/></svg>
<span class="t" style="left:598.0px;top:99.1px;font-size:11.17px;color:#727272;transform:scaleX(0.904);">Add-ins</span>
<span class="t" style="left:600.2px;top:134.1px;font-size:9.64px;color:#fff;transform:scaleX(0.913);">Add-ins</span>
<div class="sep" style="left:641px;top:68px;height:75px"></div>
<svg style="left:693.8px;top:136px" width="8.4" height="5" viewBox="0 0 8.4 5" ><path d="M0.6 4.4 L4.2 0.7 L7.8 4.4" fill="none" stroke="#e0e0e0" stroke-width="1.2" stroke-linecap="round" stroke-linejoin="round" /></svg>
<div class="fbox" style="left:5px;top:154px;width:86px;height:25px"></div>
<div class="fbox" style="left:107px;top:154px;width:62px;height:25px"></div>
<div class="fbox" style="left:172px;top:154px;width:541px;height:45px;border-radius:5px"></div>
<span class="t" style="left:10.4px;top:159.5px;font-size:14.53px;color:#fff;transform:scaleX(0.806);">EXP</span>
<svg style="left:77.5px;top:164.79999999999998px" width="7" height="3.6" viewBox="0 0 7 3.6" ><path d="M0 0 L3.5 3.6 L7 0" fill="none" stroke="#d0d0d0" stroke-width="1.2" stroke-linecap="round" stroke-linejoin="round"/></svg>
<div class="a" style="left:98px;top:161.6px;width:2px;height:2px;background:#d8d8d8;border-radius:1px"></div>
<div class="a" style="left:98px;top:165.6px;width:2px;height:2px;background:#d8d8d8;border-radius:1px"></div>
<div class="a" style="left:98px;top:169.6px;width:2px;height:2px;background:#d8d8d8;border-radius:1px"></div>
<svg style="left:113px;top:162px" width="10" height="10" viewBox="0 0 10 10" ><path d="M0.7 0.7 L9.3 9.3 M9.3 0.7 L0.7 9.3" fill="none" stroke="#d2484f" stroke-width="1.15" stroke-linecap="round" stroke-linejoin="round" /></svg>
<svg style="left:131.6px;top:161.6px" width="13" height="10" viewBox="0 0 13 10" ><path d="M0.7 5.8 L4.2 9.2 L12.2 0.8" fill="none" stroke="#4aa564" stroke-width="1.05" stroke-linecap="round" stroke-linejoin="round" /></svg>
<span class="t" style="left:152.6px;top:157.6px;font-size:15.5px;font-family:'Liberation Serif',serif;font-style:italic;color:#dcdcdc;letter-spacing:-0.8px;-webkit-text-stroke:0.2px #dcdcdc">fx</span>
<span class="t" style="left:183.4px;top:160.5px;font-size:13.83px;color:#fff;transform:scaleX(0.899);">=PERCENTRANK.EXC(</span>
<span class="t" style="left:318.0px;top:160.5px;font-size:13.83px;color:#fff;transform:scaleX(0.934);">C2:C8</span>
<span class="t" style="left:354.6px;top:160.5px;font-size:13.83px;color:#fff;transform:scaleX(1.032);">,8.5,-2)</span>
<svg style="left:700px;top:161.8px" width="8.4" height="5" viewBox="0 0 8.4 5" ><path d="M0.6 4.4 L4.2 0.7 L7.8 4.4" fill="none" stroke="#d8d8d8" stroke-width="1.2" stroke-linecap="round" stroke-linejoin="round" /></svg>
<div class="a" style="left:27px;top:225px;width:675px;height:247px;background:#fff;"></div>
<div class="a" style="left:98px;top:225px;width:1px;height:247px;background:#e5e5e5;"></div>
<div class="a" style="left:214px;top:225px;width:1px;height:247px;background:#e5e5e5;"></div>
<div class="a" style="left:370px;top:225px;width:1px;height:247px;background:#e5e5e5;"></div>
<div class="a" style="left:442px;top:225px;width:1px;height:247px;background:#e5e5e5;"></div>
<div class="a" style="left:514px;top:225px;width:1px;height:247px;background:#e5e5e5;"></div>
<div class="a" style="left:586px;top:225px;width:1px;height:247px;background:#e5e5e5;"></div>
<div class="a" style="left:657px;top:225px;width:1px;height:247px;background:#e5e5e5;"></div>
<div class="a" style="left:27px;top:245px;width:675px;height:1px;background:#e5e5e5;"></div>
<div class="a" style="left:27px;top:266px;width:675px;height:1px;background:#e5e5e5;"></div>
<div class="a" style="left:27px;top:287px;width:675px;height:1px;background:#e5e5e5;"></div>
<div class="a" style="left:27px;top:307px;width:675px;height:1px;background:#e5e5e5;"></div>
<div class="a" style="left:27px;top:328px;width:675px;height:1px;background:#e5e5e5;"></div>
<div class="a" style="left:27px;top:348px;width:675px;height:1px;background:#e5e5e5;"></div>
<div class="a" style="left:27px;top:369px;width:675px;height:1px;background:#e5e5e5;"></div>
<div class="a" style="left:27px;top:390px;width:675px;height:1px;background:#e5e5e5;"></div>
<div class="a" style="left:27px;top:410px;width:675px;height:1px;background:#e5e5e5;"></div>
<div class="a" style="left:27px;top:431px;width:675px;height:1px;background:#e5e5e5;"></div>
<div class="a" style="left:27px;top:452px;width:675px;height:1px;background:#e5e5e5;"></div>
<div class="a" style="left:0px;top:204px;width:702px;height:21px;background:#0c0c0c;"></div>
<div class="a" style="left:442px;top:204.4px;width:73px;height:20.6px;background:#656565;"></div>
<div class="a" style="left:442px;top:224px;width:73px;height:1px;background:#8fc4a4;"></div>
<div class="a" style="left:26px;top:206px;width:1px;height:19px;background:#3a3a3a;"></div>
<div class="a" style="left:98px;top:206px;width:1px;height:19px;background:#3a3a3a;"></div>
<div class="a" style="left:214px;top:206px;width:1px;height:19px;background:#3a3a3a;"></div>
<div class="a" style="left:370px;top:206px;width:1px;height:19px;background:#3a3a3a;"></div>
<div class="a" style="left:442px;top:206px;width:1px;height:19px;background:#3a3a3a;"></div>
<div class="a" style="left:514px;top:206px;width:1px;height:19px;background:#3a3a3a;"></div>
<div class="a" style="left:586px;top:206px;width:1px;height:19px;background:#3a3a3a;"></div>
<div class="a" style="left:657px;top:206px;width:1px;height:19px;background:#3a3a3a;"></div>
<div class="a" style="left:0px;top:225px;width:27px;height:248px;background:#0c0c0c;"></div>
<div class="a" style="left:0px;top:431px;width:26px;height:21px;background:#636363;"></div>
<div class="a" style="left:26px;top:431px;width:1px;height:21px;background:#8fc4a4;"></div>
<div class="a" style="left:0px;top:245px;width:26px;height:1px;background:#2c2c2c;"></div>
<div class="a" style="left:0px;top:266px;width:26px;height:1px;background:#2c2c2c;"></div>
<div class="a" style="left:0px;top:287px;width:26px;height:1px;background:#2c2c2c;"></div>
<div class="a" style="left:0px;top:307px;width:26px;height:1px;background:#2c2c2c;"></div>
<div class="a" style="left:0px;top:328px;width:26px;height:1px;background:#2c2c2c;"></div>
<div class="a" style="left:0px;top:348px;width:26px;height:1px;background:#2c2c2c;"></div>
<div class="a" style="left:0px;top:369px;width:26px;height:1px;background:#2c2c2c;"></div>
<div class="a" style="left:0px;top:390px;width:26px;height:1px;background:#2c2c2c;"></div>
<div class="a" style="left:0px;top:410px;width:26px;height:1px;background:#2c2c2c;"></div>
<div class="a" style="left:0px;top:431px;width:26px;height:1px;background:#2c2c2c;"></div>
<div class="a" style="left:0px;top:452px;width:26px;height:1px;background:#2c2c2c;"></div>
<svg style="left:9px;top:207px" width="17" height="17" viewBox="0 0 17 17" ><path d="M16 1 L16 16 L1 16 Z" fill="#7a7a7a"/></svg>
<span class="t" style="left:63.3px;top:208.8px;font-size:13.41px;color:#fff;transform-origin:50% 50%;transform:translateX(-50%) scaleX(1.0);">A</span>
<span class="t" style="left:157.3px;top:208.8px;font-size:13.41px;color:#fff;transform-origin:50% 50%;transform:translateX(-50%) scaleX(1.0);">B</span>
<span class="t" style="left:293.3px;top:208.8px;font-size:13.41px;color:#fff;transform-origin:50% 50%;transform:translateX(-50%) scaleX(1.0);">C</span>
<span class="t" style="left:407.3px;top:208.8px;font-size:13.41px;color:#fff;transform-origin:50% 50%;transform:translateX(-50%) scaleX(1.0);">D</span>
<span class="t" style="left:479.3px;top:208.8px;font-size:13.41px;color:#fff;transform-origin:50% 50%;transform:translateX(-50%) scaleX(1.0);">E</span>
<span class="t" style="left:551.3px;top:208.8px;font-size:13.41px;color:#fff;transform-origin:50% 50%;transform:translateX(-50%) scaleX(1.0);">F</span>
<span class="t" style="left:622.8px;top:208.8px;font-size:13.41px;color:#fff;transform-origin:50% 50%;transform:translateX(-50%) scaleX(1.0);">G</span>
<span class="t" style="left:694.3px;top:208.8px;font-size:13.41px;color:#fff;transform-origin:50% 50%;transform:translateX(-50%) scaleX(1.0);">H</span>
<span class="t" style="left:13.3px;top:230.2px;font-size:13.27px;color:#fff;transform-origin:50% 50%;transform:translateX(-50%) scaleX(0.97);">1</span>
<span class="t" style="left:13.3px;top:250.8px;font-size:13.27px;color:#fff;transform-origin:50% 50%;transform:translateX(-50%) scaleX(0.97);">2</span>
<span class="t" style="left:13.3px;top:271.4px;font-size:13.27px;color:#fff;transform-origin:50% 50%;transform:translateX(-50%) scaleX(0.97);">3</span>
<span class="t" style="left:13.3px;top:292.0px;font-size:13.27px;color:#fff;transform-origin:50% 50%;transform:translateX(-50%) scaleX(0.97);">4</span>
<span class="t" style="left:13.3px;top:312.6px;font-size:13.27px;color:#fff;transform-origin:50% 50%;transform:translateX(-50%) scaleX(0.97);">5</span>
<span class="t" style="left:13.3px;top:333.2px;font-size:13.27px;color:#fff;transform-origin:50% 50%;transform:translateX(-50%) scaleX(0.97);">6</span>
<span class="t" style="left:13.3px;top:353.8px;font-size:13.27px;color:#fff;transform-origin:50% 50%;transform:translateX(-50%) scaleX(0.97);">7</span>
<span class="t" style="left:13.3px;top:374.4px;font-size:13.27px;color:#fff;transform-origin:50% 50%;transform:translateX(-50%) scaleX(0.97);">8</span>
<span class="t" style="left:13.3px;top:395.0px;font-size:13.27px;color:#fff;transform-origin:50% 50%;transform:translateX(-50%) scaleX(0.97);">9</span>
<span class="t" style="left:13.3px;top:415.6px;font-size:13.27px;color:#fff;transform-origin:50% 50%;transform:translateX(-50%) scaleX(0.97);">10</span>
<span class="t" style="left:13.3px;top:436.2px;font-size:13.27px;color:#fff;transform-origin:50% 50%;transform:translateX(-50%) scaleX(0.97);">11</span>
<span class="t" style="left:13.3px;top:456.8px;font-size:13.27px;color:#fff;transform-origin:50% 50%;transform:translateX(-50%) scaleX(0.97);">12</span>
<div class="a" style="left:99px;top:225px;width:272px;height:21px;background:#ed7d31;"></div>
<span class="t" style="left:173.6px;top:227.5px;font-size:15.5px;color:#1a0800;font-weight:bold;transform:scaleX(0.808);">PERCENTRANK.EXC</span>
<div class="a" style="left:99px;top:246px;width:116px;height:144px;background:#c6e0b4;"></div>
<span class="t" style="left:138.7px;top:373.3px;font-size:14.39px;color:#000;font-weight:bold;transform:scaleX(0.961);">Array</span>
<div class="a" style="left:215px;top:246px;width:156px;height:144px;background:#bbd8ba;"></div>
<div class="a" style="left:215px;top:266px;width:156px;height:1px;background:#4f7350;"></div>
<div class="a" style="left:215px;top:287px;width:156px;height:1px;background:#4f7350;"></div>
<div class="a" style="left:215px;top:307px;width:156px;height:1px;background:#4f7350;"></div>
<div class="a" style="left:215px;top:328px;width:156px;height:1px;background:#4f7350;"></div>
<div class="a" style="left:215px;top:348px;width:156px;height:1px;background:#4f7350;"></div>
<div class="a" style="left:215px;top:369px;width:156px;height:1px;background:#4f7350;"></div>
<span class="t" style="left:361.2px;top:250.2px;font-size:13.41px;color:#111;transform:scaleX(0.937);">2</span>
<span class="t" style="left:361.2px;top:270.8px;font-size:13.41px;color:#111;transform:scaleX(0.937);">4</span>
<span class="t" style="left:361.2px;top:291.4px;font-size:13.41px;color:#111;transform:scaleX(0.937);">5</span>
<span class="t" style="left:361.2px;top:312.0px;font-size:13.41px;color:#111;transform:scaleX(0.937);">6</span>
<span class="t" style="left:353.8px;top:332.6px;font-size:13.41px;color:#111;transform:scaleX(0.965);">10</span>
<span class="t" style="left:353.8px;top:353.2px;font-size:13.41px;color:#111;transform:scaleX(0.965);">14</span>
<span class="t" style="left:361.2px;top:373.8px;font-size:13.41px;color:#111;transform:scaleX(0.937);">3</span>
<div class="a" style="left:99px;top:390px;width:272px;height:41px;background:#c6e0b4;"></div>
<div class="a" style="left:99px;top:390px;width:116px;height:1px;background:#5d7d55;"></div>
<div class="a" style="left:99px;top:410px;width:272px;height:1px;background:#5d7d55;"></div>
<div class="a" style="left:99px;top:431px;width:273px;height:1px;background:#5d7d55;"></div>
<div class="a" style="left:98px;top:246px;width:1px;height:186px;background:#5d7d55;"></div>
<div class="a" style="left:214px;top:390px;width:1px;height:41px;background:#5d7d55;"></div>
<div class="a" style="left:371px;top:390px;width:1px;height:41px;background:#5d7d55;"></div>
<div class="a" style="left:99px;top:245px;width:116px;height:1px;background:#b0672e;"></div>
<span class="t" style="left:105.8px;top:394.3px;font-size:14.39px;color:#000;transform-origin:50% 50%;transform:translateX(-50%) scaleX(0.9);font-weight:bold;">X</span>
<span class="t" style="left:102.0px;top:414.8px;font-size:14.39px;color:#000;font-weight:bold;transform:scaleX(0.919);">Result</span>
<span class="t" style="left:353.4px;top:394.6px;font-size:13.41px;color:#111;transform:scaleX(0.992);">67</span>
<span class="t" style="left:333.8px;top:415.2px;font-size:13.41px;color:#111;transform:scaleX(1.025);">0.703</span>
<svg style="left:215px;top:411px" width="5" height="5" viewBox="0 0 5 5" ><path d="M0 0 L5 0 L0 5 Z" fill="#1f7a3c"/></svg>
<div class="a" style="left:214px;top:245px;width:158px;height:146px;background:transparent;border:1px solid #8fb3de"></div>
<div class="a" style="left:213.6px;top:244.6px;width:2.8px;height:2.8px;background:#7ca5d8;"></div>
<div class="a" style="left:369.8px;top:244.6px;width:2.8px;height:2.8px;background:#7ca5d8;"></div>
<div class="a" style="left:213.6px;top:388.8px;width:2.8px;height:2.8px;background:#7ca5d8;"></div>
<div class="a" style="left:369.8px;top:388.8px;width:2.8px;height:2.8px;background:#7ca5d8;"></div>
<div class="a" style="left:443px;top:390px;width:72px;height:21px;background:#c6e0b4;border:1px solid #5d7d55"></div>
<svg style="left:443.6px;top:390.8px" width="5" height="5" viewBox="0 0 5 5" ><path d="M0 0 L5 0 L0 5 Z" fill="#1f7a3c"/></svg>
<span class="t" style="left:462.6px;top:394.0px;font-size:14.25px;color:#111;transform:scaleX(1.041);">#N/A</span>
<div class="a" style="left:443px;top:431px;width:259px;height:22px;background:#c6e0b4;"></div>
<div class="a" style="left:442px;top:430.6px;width:74px;height:1.2px;background:#3f7f4d;"></div>
<div class="a" style="left:442.2px;top:430.6px;width:1.6px;height:22.6px;background:#2f6f40;"></div>
<div class="a" style="left:442.2px;top:451.6px;width:71px;height:1.6px;background:#2f6f40;"></div>
<div class="a" style="left:513.6px;top:451px;width:3px;height:3px;background:#2f6f40;"></div>
<span class="t" style="left:445.4px;top:435.6px;font-size:14.39px;color:#111;transform:scaleX(0.869);">=PERCENTRANK.EXC(</span>
<span class="t" style="left:580.4px;top:435.6px;font-size:14.39px;color:#5b9bd5;transform:scaleX(0.898);">C2:C8</span>
<span class="t" style="left:617.0px;top:435.6px;font-size:14.39px;color:#111;transform:scaleX(0.979);">,8.5,-2)</span>
<div class="a" style="left:662.4px;top:434px;width:1px;height:17px;background:#222;"></div>
<svg style="left:435px;top:428px" width="244" height="29.6" viewBox="0 0 244 29.6" ><rect x="1.4" y="1.6" width="241.2" height="27" fill="none" stroke="#d0223a" stroke-width="2.8"/></svg>
<div class="a" style="left:702px;top:204px;width:18px;height:270px;background:#0a0a0a;"></div>
<div class="a" style="left:705px;top:206px;width:11px;height:266px;background:#1c1c1c;border-radius:5px"></div>
<div class="a" style="left:707px;top:219px;width:7px;height:144px;background:#9a9a9a;border-radius:3.5px"></div>
<svg style="left:706.5px;top:209px" width="8" height="5" viewBox="0 0 8 5" ><path d="M4 0 L8 5 L0 5 Z" fill="#9a9a9a"/></svg>
<svg style="left:706.5px;top:464px" width="8" height="5" viewBox="0 0 8 5" ><path d="M0 0 L8 0 L4 5 Z" fill="#9a9a9a"/></svg>
<div class="a" style="left:0px;top:473px;width:720px;height:27px;background:#0a0a0a;"></div>
<div class="a" style="left:27px;top:472px;width:675px;height:1px;background:#fff;"></div>
<div class="a" style="left:84px;top:472px;width:64px;height:8px;background:#fff;"></div>
<div class="a" style="left:0px;top:473px;width:92px;height:8px;background:#0a0a0a;border-top-right-radius:5px"></div>
<div class="a" style="left:92px;top:472px;width:49px;height:25px;background:#fff;border-radius:0 0 5px 5px"></div>
<div class="a" style="left:141px;top:473px;width:300px;height:8px;background:#0a0a0a;border-top-left-radius:5px"></div>
<span class="t" style="left:99.0px;top:478.3px;font-size:12.99px;color:#111;transform:scaleX(0.826);-webkit-text-stroke:0.25px #111;">Sheet1</span>
<div class="a" style="left:99px;top:493px;width:34px;height:2px;background:#1e7a46;border-radius:1px"></div>
<div class="a" style="left:144px;top:478px;width:1px;height:17px;background:#5a5a5a;"></div>
<svg style="left:19px;top:481.5px" width="5" height="9" viewBox="0 0 5 9" ><path d="M4.5 0.5 L0.7 4.5 L4.5 8.5" fill="none" stroke="#9c9c9c" stroke-width="1.2" stroke-linecap="round" stroke-linejoin="round"/></svg>
<svg style="left:46px;top:481.5px" width="5" height="9" viewBox="0 0 5 9" ><path d="M0.5 0.5 L4.3 4.5 L0.5 8.5" fill="none" stroke="#9c9c9c" stroke-width="1.2" stroke-linecap="round" stroke-linejoin="round"/></svg>
<svg style="left:178.5px;top:481.5px" width="10" height="10" viewBox="0 0 10 10" ><path d="M5 0.5 V9.5 M0.5 5 H9.5" fill="none" stroke="#cfcfcf" stroke-width="1.2" stroke-linecap="round"/></svg>
<div class="a" style="left:433.6px;top:482px;width:2px;height:2px;background:#d0d0d0;border-radius:1px"></div>
<div class="a" style="left:433.6px;top:485.5px;width:2px;height:2px;background:#d0d0d0;border-radius:1px"></div>
<div class="a" style="left:433.6px;top:489px;width:2px;height:2px;background:#d0d0d0;border-radius:1px"></div>
<div class="a" style="left:447px;top:479.5px;width:256px;height:13px;background:#1e1e1e;border-radius:6.5px"></div>
<div class="a" style="left:462px;top:483px;width:199px;height:7px;background:#9a9a9a;border-radius:3.5px"></div>
<svg style="left:452.5px;top:482.5px" width="5" height="8" viewBox="0 0 5 8" ><path d="M5 0 L5 8 L0 4 Z" fill="#9a9a9a"/></svg>
<svg style="left:693.5px;top:482.5px" width="5" height="8" viewBox="0 0 5 8" ><path d="M0 0 L0 8 L5 4 Z" fill="#a6a6a6"/></svg>
<div class="a" style="left:0px;top:500px;width:720px;height:17px;background:#1b1b1b;"></div>
<span class="t" style="left:8.4px;top:505.3px;font-size:9.64px;color:#f0f0f0;transform:scaleX(0.916);-webkit-text-stroke:0.2px #f0f0f0;">Edit</span>
<svg style="left:48px;top:504.5px" width="12" height="12" viewBox="0 0 12 12" ><rect x="0.6" y="0.6" width="10.4" height="9" fill="none" stroke="#e4e4e4" stroke-width="1.1"/><rect x="0.6" y="0.6" width="10.4" height="2.4" fill="#e4e4e4"/><circle cx="7.8" cy="8" r="3" fill="#1b1b1b" stroke="#e4e4e4" stroke-width="1.1"/><circle cx="7.8" cy="8" r="1.2" fill="#e4e4e4"/><path d="M2.2 5 H4.6 M2.2 7 H3.6" stroke="#e4e4e4" stroke-width="0.9"/></svg>
<svg style="left:73.5px;top:503px" width="13" height="13" viewBox="0 0 13 13" ><circle cx="5.4" cy="2" r="1.6" fill="none" stroke="#e4e4e4" stroke-width="1"/><path d="M0.8 2.6 Q1.4 5.2 3.8 5.4 V8.6 L2.2 12.4 M3.8 5.4 H7 Q9.4 5.2 10 2.6 M7 5.4 V8" fill="none" stroke="#e4e4e4" stroke-width="1.1" stroke-linecap="round" stroke-linejoin="round"/><path d="M6.4 10.4 L8.2 12.2 L11.8 8.2" fill="none" stroke="#e4e4e4" stroke-width="1.2" stroke-linecap="round" stroke-linejoin="round"/></svg>
<span class="t" style="left:89.0px;top:505.3px;font-size:9.64px;color:#f0f0f0;transform:scaleX(0.896);-webkit-text-stroke:0.2px #f0f0f0;">Accessibility: Good to go</span>
<svg style="left:471.5px;top:503.5px" width="11" height="11" viewBox="0 0 11 11" ><rect x="0.5" y="0.5" width="10" height="10" fill="none" stroke="#6e6e6e" stroke-width="1"/><path d="M0.5 3.8 H10.5 M0.5 7.2 H10.5 M3.8 0.5 V10.5 M7.2 0.5 V10.5" stroke="#6e6e6e" stroke-width="1"/></svg>
<svg style="left:505.5px;top:503.5px" width="11" height="11" viewBox="0 0 11 11" ><rect x="0.5" y="0.5" width="10" height="10" fill="none" stroke="#6e6e6e" stroke-width="1"/><rect x="3" y="3" width="5" height="5" fill="none" stroke="#6e6e6e" stroke-width="1"/><path d="M4 5 H7 M4 6.6 H7" stroke="#6e6e6e" stroke-width="0.7"/></svg>
<svg style="left:539px;top:503.5px" width="11" height="11" viewBox="0 0 11 11" ><rect x="0.5" y="0.5" width="10" height="10" fill="none" stroke="#6e6e6e" stroke-width="1"/><path d="M3.6 0.5 V6 H7.4 V0.5" fill="none" stroke="#6e6e6e" stroke-width="1"/></svg>
<div class="a" style="left:566px;top:509px;width:6px;height:1px;background:#555;"></div>
<div class="a" style="left:577px;top:509px;width:83px;height:1px;background:#c8c8c8;"></div>
<div class="a" style="left:618px;top:505.5px;width:1px;height:8px;background:#c8c8c8;"></div>
<div class="a" style="left:664.5px;top:509px;width:7px;height:1px;background:#555;"></div>
<div class="a" style="left:667.5px;top:506px;width:1px;height:7px;background:#555;"></div>
<span class="t" style="left:681.6px;top:505.2px;font-size:9.5px;color:#5e5e5e;transform:scaleX(0.921);">100%</span>
</div>
</body>
</html>
